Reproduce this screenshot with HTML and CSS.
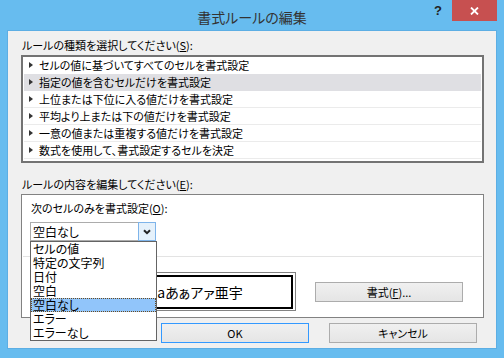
FILE: index.html
```html
<!DOCTYPE html>
<html lang="ja">
<head>
<meta charset="utf-8">
<title>書式ルールの編集</title>
<link rel="stylesheet" href="styles.css">
</head>
<body>
<div class="window">
  <div class="titlebar">
    <div class="title">書式ルールの編集</div>
    <div class="controls">
      <div class="help">?</div>
      <div class="close">
        <svg width="9" height="8" viewBox="0 0 9 8"><path d="M1 0.5L8 7.5M8 0.5L1 7.5" stroke="#fff" stroke-width="1.8"/></svg>
      </div>
    </div>
  </div>
  <div class="client">
    <div class="label">ルールの種類を選択してください(<u>S</u>):</div>
    <div class="listbox">
      <div class="row"><span class="tri"></span>セルの値に基づいてすべてのセルを書式設定</div>
      <div class="row selected"><span class="tri"></span>指定の値を含むセルだけを書式設定</div>
      <div class="row"><span class="tri"></span>上位または下位に入る値だけを書式設定</div>
      <div class="row"><span class="tri"></span>平均より上または下の値だけを書式設定</div>
      <div class="row"><span class="tri"></span>一意の値または重複する値だけを書式設定</div>
      <div class="row"><span class="tri"></span>数式を使用して、書式設定するセルを決定</div>
    </div>
    <div class="label label-edit">ルールの内容を編集してください(<u>E</u>):</div>
    <div class="editor">
      <div class="criteria">
        <div class="label">次のセルのみを書式設定(<u>O</u>):</div>
        <div class="combo">
          <span class="combo-value">空白なし</span>
          <span class="combo-btn"><svg width="8" height="6" viewBox="0 0 8 6"><path d="M1 1.2L4 4.2L7 1.2" fill="none" stroke="#222" stroke-width="2"/></svg></span>
          <ul class="dropdown">
            <li>セルの値</li>
            <li>特定の文字列</li>
            <li>日付</li>
            <li>空白</li>
            <li class="current">空白なし</li>
            <li>エラー</li>
            <li>エラーなし</li>
          </ul>
        </div>
      </div>
      <div class="divider"></div>
      <div class="preview-row">
        <div class="preview-spacer"></div>
        <div class="preview"><div class="preview-inner">Aaあぁアァ亜宇</div></div>
        <button class="btn format">書式(<u>F</u>)...</button>
      </div>
    </div>
    <div class="actions">
      <button class="btn default">OK</button>
      <button class="btn">キャンセル</button>
    </div>
  </div>
</div>
</body>
</html>
```

FILE: styles.css
```css
* { box-sizing: border-box; }
html, body { margin: 0; padding: 0; }
body {
  width: 504px;
  height: 358px;
  overflow: hidden;
  font-family: "Noto Sans CJK JP", "Noto Sans", sans-serif;
  font-feature-settings: "palt";
  color: #000;
}
.window {
  width: 504px;
  height: 358px;
  background: #67bcef;
  display: flex;
  flex-direction: column;
}
.titlebar {
  height: 31px;
  display: grid;
  grid-template-columns: 1fr auto 1fr;
  align-items: start;
}
.title {
  grid-column: 2;
  font-size: 14px;
  line-height: 20px;
  padding-top: 7px;
  color: #333;
}
.controls {
  grid-column: 3;
  display: flex;
  justify-content: flex-end;
  align-items: flex-start;
  padding-right: 7px;
}
.help {
  width: 16px;
  height: 21px;
  margin-right: 6px;
  font: bold 13px/21px "Liberation Sans", sans-serif;
  color: #222;
  text-align: center;
}
.close {
  width: 45px;
  height: 21px;
  background: #c75050;
  display: flex;
  align-items: center;
  justify-content: center;
}
.close svg { display: block; }
.client {
  flex: 1;
  margin: 0 8px 10px;
  background: #f0f0f0;
  box-shadow: 0 0 0 1px #5caee4;
  padding: 6px 12px 0 13px;
  display: flex;
  flex-direction: column;
  font-size: 11px;
}
.label {
  line-height: 16px;
  padding-left: 1px;
  white-space: nowrap;
}
.listbox {
  margin-top: 2px;
  height: 108px;
  border: 2px solid #737373;
  background: #fff;
  padding: 0 1px 2px;
}
.row {
  height: 17px;
  line-height: 16px;
  border-bottom: 1px solid #ebebeb;
  padding-left: 5px;
  display: flex;
  align-items: center;
  white-space: nowrap;
}
.row:first-child { border-bottom-color: transparent; }
.row.selected { background: #dfdfe3; border-bottom-color: #dfdfe3; }
.tri {
  width: 0;
  height: 0;
  border-left: 4px solid #333;
  border-top: 3px solid transparent;
  border-bottom: 3px solid transparent;
  margin-right: 6px;
}
.label-edit { margin-top: 13px; }
.editor {
  margin-top: 2px;
  height: 124px;
  border: 1px solid #828282;
  background: #fff;
}
.criteria {
  padding: 5px 0 0 8px;
}
.criteria .label { padding-left: 1px; }
.combo {
  position: relative;
  margin-top: 6px;
  width: 126px;
  height: 19px;
  border: 1px solid #acacac;
  background: #fff;
  display: flex;
  align-items: center;
  font-size: 12px;
}
.combo-value { padding-left: 2px; line-height: 17px; }
.combo-btn {
  position: absolute;
  top: -1px;
  right: -1px;
  width: 18px;
  height: 19px;
  border: 1px solid #7eb4ea;
  background: #e5f1fb;
  display: flex;
  align-items: center;
  justify-content: center;
}
.combo-btn svg { display: block; }
.dropdown {
  position: absolute;
  top: 18px;
  left: -1px;
  z-index: 2;
  width: 127px;
  margin: 0;
  padding: 0;
  list-style: none;
  background: #fff;
  border: 1px solid #646464;
}
.dropdown li {
  height: 14px;
  line-height: 14px;
  padding-left: 2px;
  white-space: nowrap;
}
.dropdown li.current {
  background: #91c5fa;
  outline: 1px dotted #6b4a1e;
  outline-offset: -1px;
}
.divider {
  margin: 15px 1px 0;
  height: 1px;
  background: #e3e3e3;
}
.preview-row {
  display: flex;
  align-items: center;
  padding: 15px 0 0 9px;
}
.preview-spacer { width: 64px; height: 16px; }
.preview {
  width: 201px;
  height: 39px;
  border: 1px solid #828282;
  padding: 2px 2px 1px 2px;
}
.preview-inner {
  height: 100%;
  border: 2px solid #000;
  display: flex;
  align-items: center;
  justify-content: center;
  font-size: 14px;
}
.btn {
  font-family: "Noto Sans CJK JP", "Noto Sans", sans-serif;
  font-feature-settings: "palt";
  font-size: 11px;
  color: #000;
  width: 148px;
  height: 20px;
  padding: 0;
  border: 1px solid #acacac;
  background: linear-gradient(#f0f0f0, #e5e5e5);
  line-height: 18px;
}
.btn.format { margin-left: 19px; }
.btn.default { border-color: #3399ff; }
.actions {
  margin-top: 5px;
  margin-right: 7px;
  display: flex;
  justify-content: flex-end;
  gap: 20px;
}
```
